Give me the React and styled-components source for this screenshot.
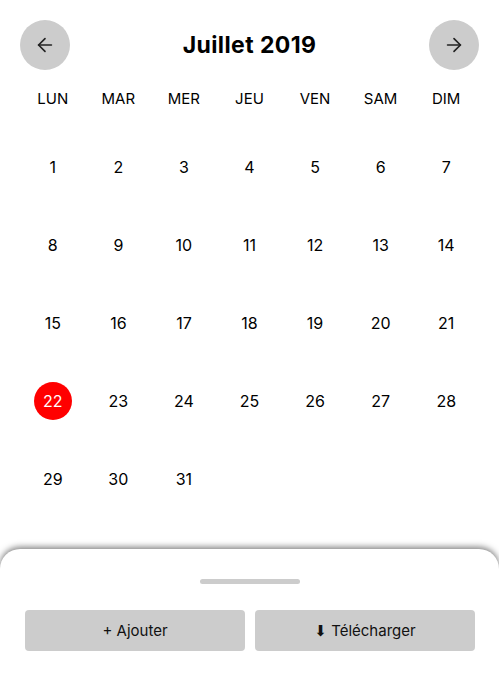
import React from 'react';
import styled, { createGlobalStyle } from 'styled-components';
import { ArrowLeft, ArrowRight } from 'lucide-react';

const GlobalStyle = createGlobalStyle`
  body {
    margin: 0;
    background: #ffffff;
    font-family: Inter, "Noto Sans", sans-serif;
    color: #000;
    overflow: hidden;
  }
`;

const Page = styled.div`
  width: 499px;
  height: 676px;
  display: flex;
  flex-direction: column;
  overflow: hidden;
`;

const Calendar = styled.div`
  padding: 20px 20px 0;
`;

const Header = styled.div`
  display: flex;
  align-items: center;
  justify-content: space-between;
  height: 50px;
`;

const NavButton = styled.button`
  width: 50px;
  height: 50px;
  border-radius: 50%;
  border: none;
  background: #cccccc;
  color: #222;
  display: flex;
  align-items: center;
  justify-content: center;
  padding: 0;
`;

const Title = styled.h1`
  margin: 0;
  font-size: 23px;
  font-weight: 700;
  letter-spacing: 0.4px;
`;

const Grid = styled.div`
  display: grid;
  grid-template-columns: repeat(7, 1fr);
`;

const Weekday = styled.div`
  text-align: center;
  font-size: 15px;
  line-height: 20px;
  margin-top: 19px;
  margin-bottom: 19px;
`;

const Cell = styled.div`
  height: 78px;
  display: flex;
  align-items: center;
  justify-content: center;
`;

const Day = styled.span`
  width: 38px;
  height: 38px;
  border-radius: 50%;
  display: flex;
  align-items: center;
  justify-content: center;
  font-size: 16px;
  background: ${p => (p.$today ? '#ff0000' : 'transparent')};
  color: ${p => (p.$today ? '#ffffff' : '#000')};
`;

const Sheet = styled.div`
  margin-top: 31px;
  flex: 1;
  border-radius: 20px 20px 0 0;
  box-shadow: 0 -2px 6px rgba(0, 0, 0, 0.5);
  background: #fff;
  padding: 30px 24px 0 25px;
  display: flex;
  flex-direction: column;
  align-items: center;
`;

const Handle = styled.div`
  width: 100px;
  height: 5px;
  border-radius: 3px;
  background: #cccccc;
`;

const Actions = styled.div`
  margin-top: 26px;
  width: 100%;
  display: grid;
  grid-template-columns: 1fr 1fr;
  gap: 10px;
`;

const ActionButton = styled.button`
  height: 41px;
  border: none;
  border-radius: 4px;
  background: #cccccc;
  color: #111;
  font-family: Inter, "DejaVu Sans", sans-serif;
  font-size: 15px;
  display: flex;
  align-items: center;
  justify-content: center;
  gap: 4px;
`;

const weekdays = ['LUN', 'MAR', 'MER', 'JEU', 'VEN', 'SAM', 'DIM'];
const days = Array.from({ length: 31 }, (_, i) => i + 1);

export default function App() {
  return (
    <Page>
      <GlobalStyle />
      <Calendar>
        <Header>
          <NavButton aria-label="Mois précédent">
            <ArrowLeft size={22} strokeWidth={1.8} />
          </NavButton>
          <Title>Juillet 2019</Title>
          <NavButton aria-label="Mois suivant">
            <ArrowRight size={22} strokeWidth={1.8} />
          </NavButton>
        </Header>
        <Grid>
          {weekdays.map(w => (
            <Weekday key={w}>{w}</Weekday>
          ))}
          {days.map(d => (
            <Cell key={d}>
              <Day $today={d === 22}>{d}</Day>
            </Cell>
          ))}
        </Grid>
      </Calendar>
      <Sheet>
        <Handle />
        <Actions>
          <ActionButton>+ Ajouter</ActionButton>
          <ActionButton>⬇ Télécharger</ActionButton>
        </Actions>
      </Sheet>
    </Page>
  );
}
